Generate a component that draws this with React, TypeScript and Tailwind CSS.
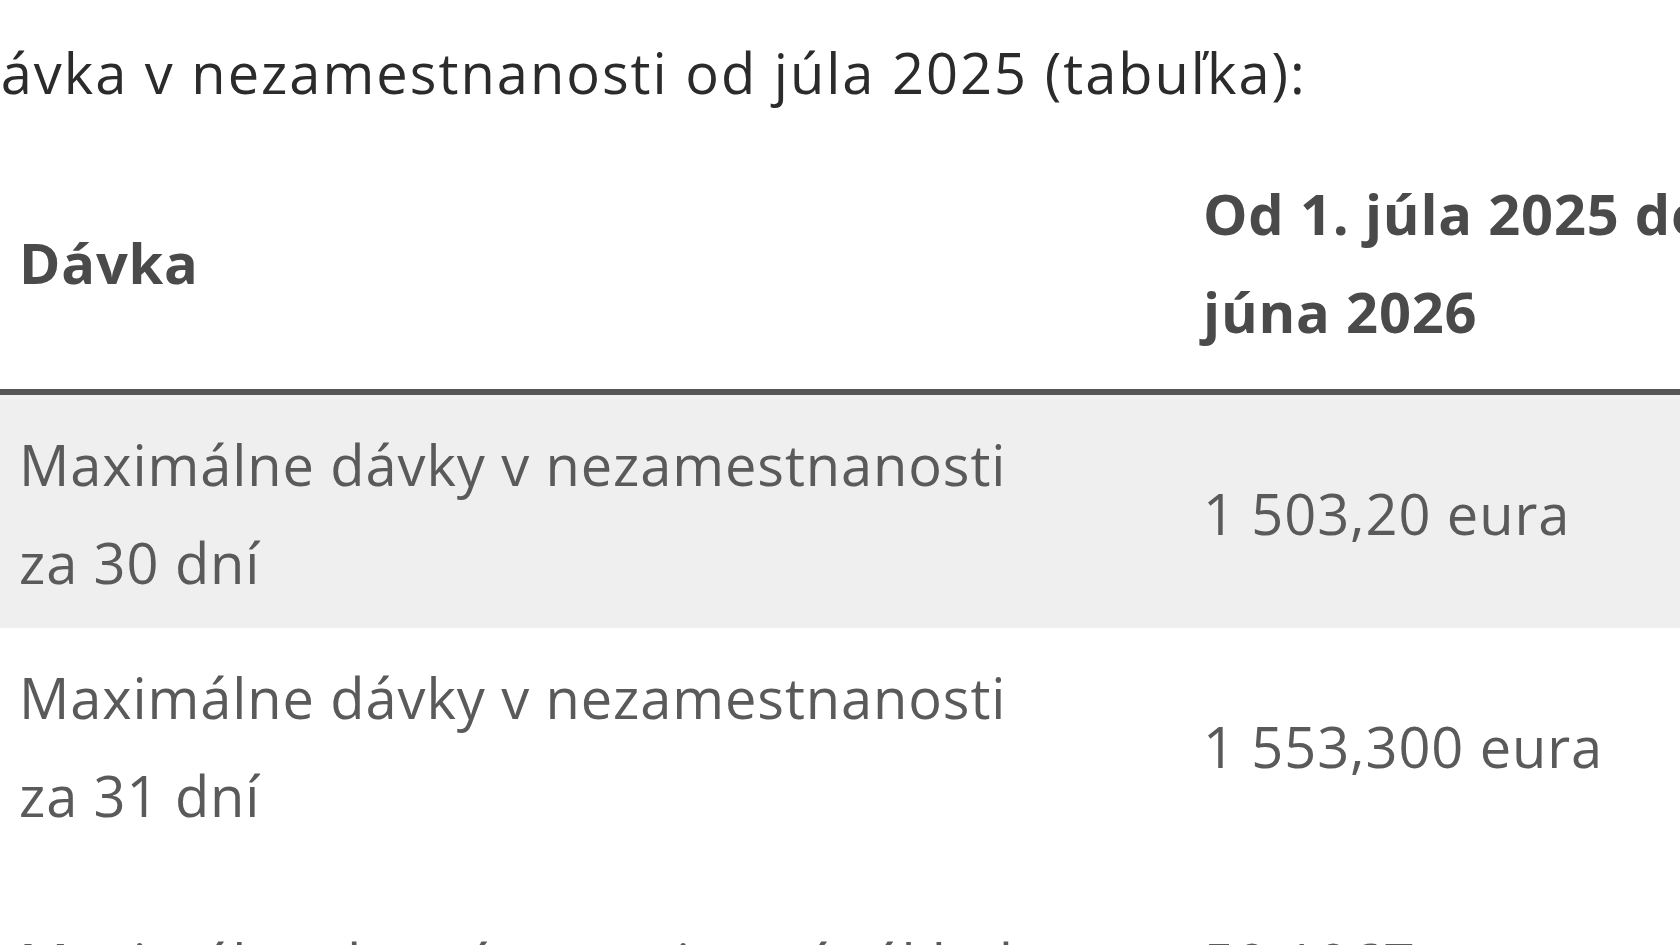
import React from 'react';

const rows = [
  { label: 'Maximálne dávky v nezamestnanosti za 30 dní', value: '1 503,20 eura', shaded: true },
  { label: 'Maximálne dávky v nezamestnanosti za 31 dní', value: '1 553,300 eura', shaded: false },
];

export default function App() {
  return (
    <div className="w-[1680px] h-[945px] overflow-hidden bg-white font-['Open_Sans',sans-serif] text-[56px] leading-[98px]">
      {/* Intro line, clipped on the left like the crop */}
      <p className="mt-[23px] -ml-[42px] whitespace-nowrap tracking-[2px] text-[#2b2b2b]">
        Dávka v nezamestnanosti od júla 2025 (tabuľka):
      </p>

      <table className="mt-[25px] table-fixed border-collapse w-[1904px]">
        <colgroup>
          <col className="w-[1184px]" />
          <col className="w-[720px]" />
        </colgroup>
        <thead>
          <tr className="border-b-[6px] border-[#555555]">
            <th className="pl-[19px] pr-[120px] pt-[18px] pb-[29px] text-left align-middle font-bold tracking-[0.8px] text-[#4a4a4a]">
              Dávka
            </th>
            <th className="pl-[19px] pr-[20px] pt-[18px] pb-[29px] text-left align-middle font-bold tracking-[0.8px] text-[#4a4a4a]">
              Od 1. júla 2025 do 30. júna 2026
            </th>
          </tr>
        </thead>
        <tbody className="text-[#5a5a5a] tracking-[0.9px]">
          {rows.map((r) => (
            <tr key={r.label} className={r.shaded ? 'bg-[#efefef]' : 'bg-white'}>
              <td className="pl-[19px] pr-[120px] pt-[20px] pb-[17px] align-middle">{r.label}</td>
              <td className="pl-[19px] pr-[20px] pt-[20px] pb-[17px] align-middle">{r.value}</td>
            </tr>
          ))}
          <tr>
            <td className="pl-[19px] pr-[120px] pt-[53px] pb-[20px] align-top">
              Maximálny denný vymeriavací základ
            </td>
            <td className="pl-[19px] pr-[20px] pt-[53px] pb-[20px] align-top">50,1067 eura</td>
          </tr>
        </tbody>
      </table>
    </div>
  );
}
